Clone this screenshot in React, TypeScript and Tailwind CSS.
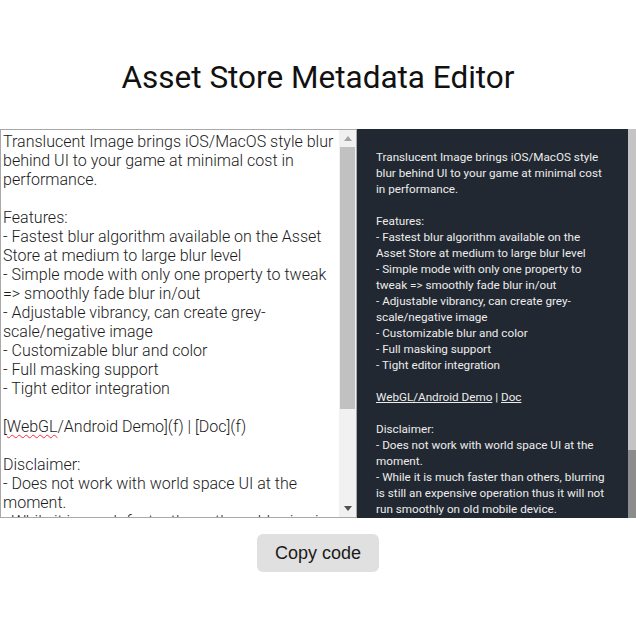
import React from "react";

const leftLines = [
  "Translucent Image brings iOS/MacOS style blur behind UI to your game at minimal cost in performance.",
  "",
  "Features:",
  "- Fastest blur algorithm available on the Asset Store at medium to large blur level",
  "- Simple mode with only one property to tweak => smoothly fade blur in/out",
  "- Adjustable vibrancy, can create grey-scale/negative image",
  "- Customizable blur and color",
  "- Full masking support",
  "- Tight editor integration",
];

const disclaimer = [
  "Disclaimer:",
  "- Does not work with world space UI at the moment.",
  "- While it is much faster than others, blurring is still an expensive operation thus it will not run smoothly on old mobile device.",
];

function Para({ text }: { text: string }) {
  return text ? <div>{text}</div> : <div className="h-[1lh]" />;
}

export default function App() {
  return (
    <div className="w-[636px] h-[637px] bg-white flex flex-col items-center overflow-hidden font-['Roboto',sans-serif]">
      <h1 className="mt-[56px] mb-[29px] text-[31.5px] leading-[44px] font-normal text-[#111]">
        Asset Store Metadata Editor
      </h1>

      <div className="w-full h-[389px] flex">
        {/* editor */}
        <div className="w-[357px] h-full border border-[#a9a9a9] flex overflow-hidden">
          <div className="flex-1 p-[2px] pr-0 text-[16px] leading-[19px] font-light text-[#1a1a1a] overflow-hidden">
            {leftLines.map((l, i) => (
              <Para key={i} text={l} />
            ))}
            <div className="h-[19px]" />
            <div>
              [<span className="underline decoration-wavy decoration-red-500 decoration-1 underline-offset-2">WebGL</span>/Android Demo](f) | [Doc](f)
            </div>
            <div className="h-[19px]" />
            {disclaimer.map((l, i) => (
              <Para key={i} text={l} />
            ))}
          </div>
          <div className="w-[17px] h-full bg-[#f1f1f1] flex flex-col items-center">
            <div className="h-[17px] flex items-center justify-center">
              <svg width="8" height="5" viewBox="0 0 8 5">
                <path d="M0 5 L4 0 L8 5 Z" fill="#a3a3a3" />
              </svg>
            </div>
            <div className="w-[15px] h-[262px] bg-[#c1c1c1]" />
            <div className="flex-1" />
            <div className="h-[17px] flex items-center justify-center">
              <svg width="8" height="5" viewBox="0 0 8 5">
                <path d="M0 0 L4 5 L8 0 Z" fill="#505050" />
              </svg>
            </div>
          </div>
        </div>

        {/* preview */}
        <div className="flex-1 h-full bg-[#222831] px-[19px] pt-[20px] text-[11.7px] leading-[16px] text-[#ececec] overflow-hidden">
          {leftLines.map((l, i) => (
            <Para key={i} text={l} />
          ))}
          <div className="h-[16px]" />
          <div>
            <span className="underline">WebGL/Android Demo</span> | <span className="underline">Doc</span>
          </div>
          <div className="h-[16px]" />
          {disclaimer.map((l, i) => (
            <Para key={i} text={l} />
          ))}
        </div>
        <div className="w-[8px] h-full flex flex-col">
          <div className="h-[321px] bg-[#c4c4c4]" />
          <div className="flex-1 bg-[#8c8c8c]" />
        </div>
      </div>

      <button className="mt-[16px] h-[38px] px-[18px] rounded-[6px] bg-[#e0e0e0] text-[18px] text-[#1a1a1a] font-['Liberation_Sans',Arial,sans-serif]">
        Copy code
      </button>
    </div>
  );
}
